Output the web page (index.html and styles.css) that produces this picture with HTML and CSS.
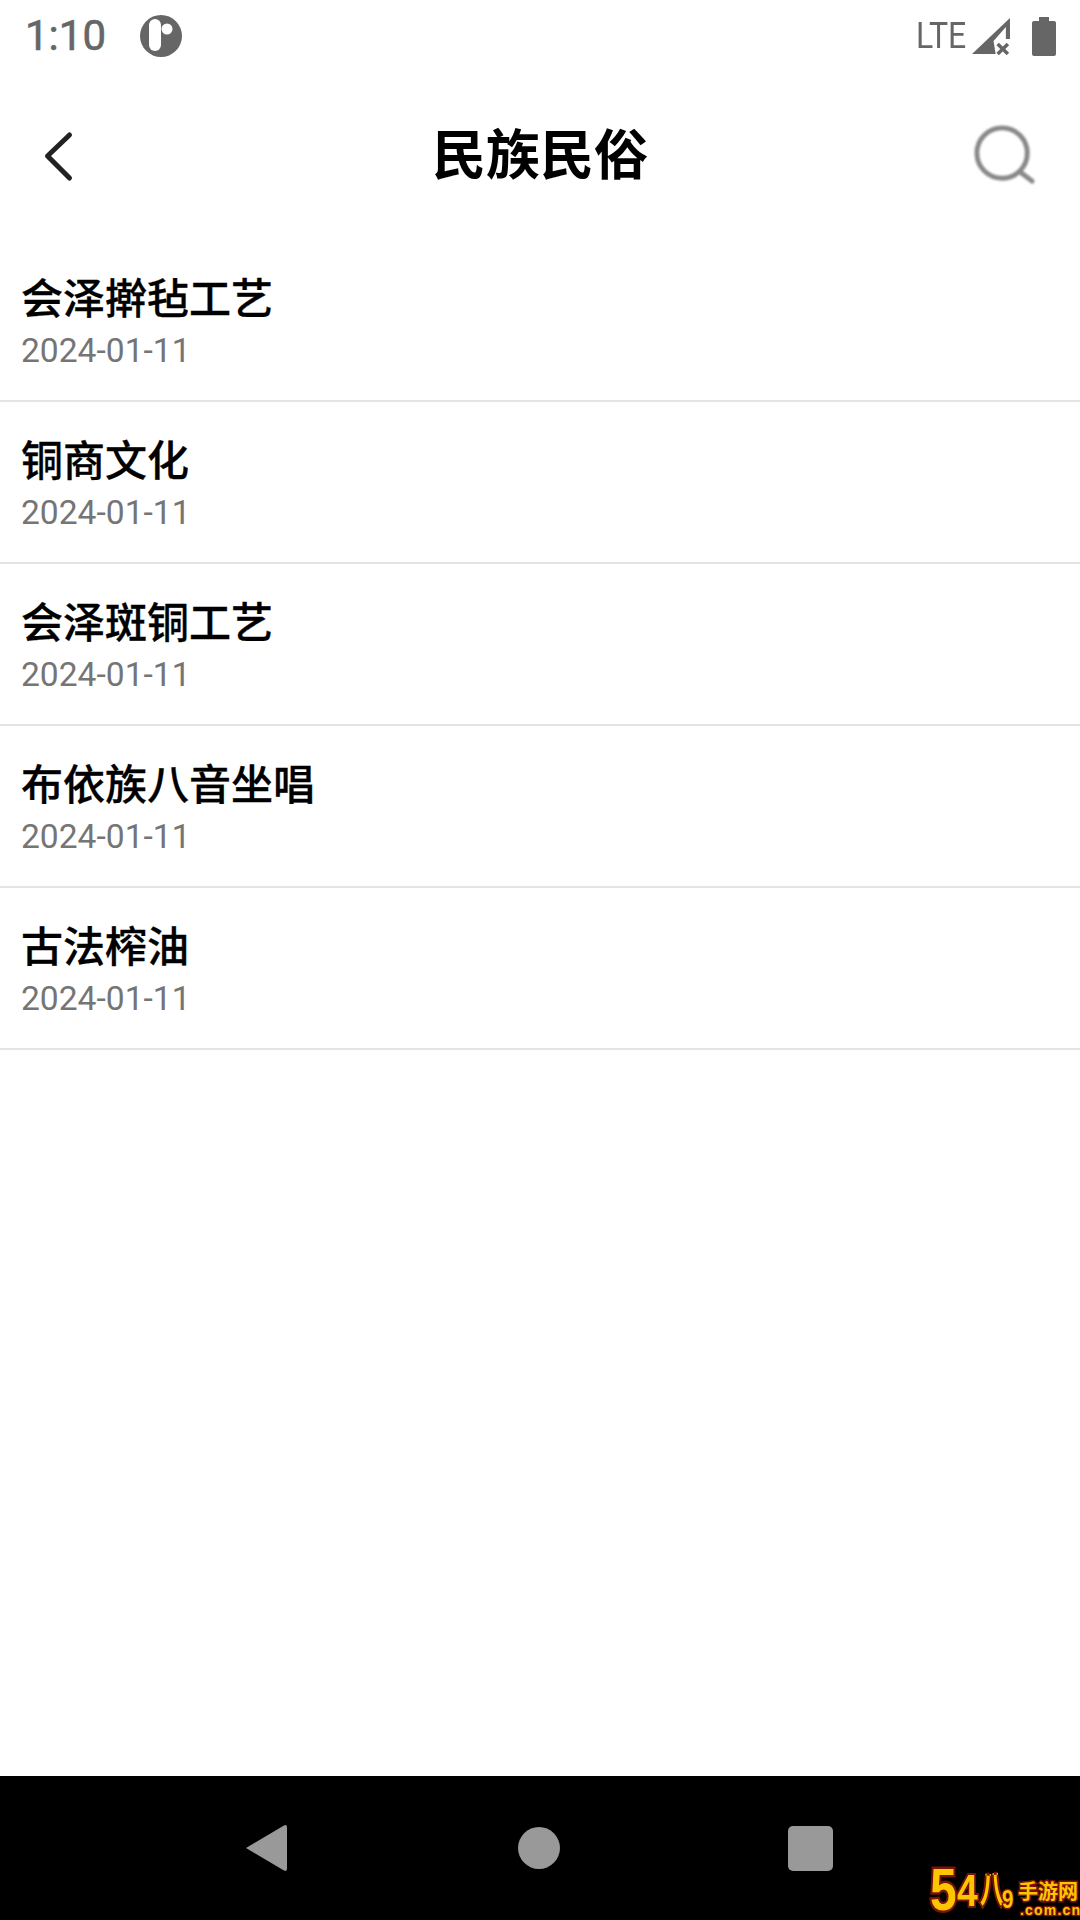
FILE: index.html
```html
<!DOCTYPE html>
<html lang="zh-CN">
<head>
<meta charset="utf-8">
<title>民族民俗</title>
<link rel="stylesheet" href="styles.css">
</head>
<body>
<div class="page">
  <div class="status">
    <span class="time">1:10</span>
    <svg class="app-dot" viewBox="0 0 42 42"><circle cx="21" cy="21" r="21" fill="#666"/><rect x="9" y="4" width="12" height="32" rx="6" fill="#fff"/><circle cx="27" cy="14" r="5.500" fill="#fff"/></svg>
    <span class="spacer"></span>
    <span class="lte">LTE</span>
    <svg class="signal" viewBox="0 0 38 38" preserveAspectRatio="none"><path d="M0 37 37 1V22H33V10L21 24 23 37z" fill="#666"/><path d="M25 27l10 10M35 27 25 37" stroke="#666" stroke-width="3.400" fill="none"/></svg>
    <svg class="battery" viewBox="0 0 24 39"><path d="M7 0h10v4h5a2 2 0 0 1 2 2v31a2 2 0 0 1-2 2H2a2 2 0 0 1-2-2V6a2 2 0 0 1 2-2h5z" fill="#666"/></svg>
  </div>
  <header class="bar">
    <svg class="back" viewBox="0 0 32 52"><path d="M26.500 5 4.500 26l22 22" fill="none" stroke="#222" stroke-width="5" stroke-linecap="round" stroke-linejoin="round"/></svg>
    <h1 class="heading">民族民俗</h1>
    <svg class="search" viewBox="0 0 64 64"><circle cx="29" cy="29" r="26" fill="none" stroke="#888" stroke-width="5"/><path d="M47 48 60 58" stroke="#888" stroke-width="5" stroke-linecap="round"/></svg>
  </header>
  <main class="list">
    <div class="row"><div class="name">会泽擀毡工艺</div><div class="date">2024-01-11</div></div>
    <div class="row"><div class="name">铜商文化</div><div class="date">2024-01-11</div></div>
    <div class="row"><div class="name">会泽斑铜工艺</div><div class="date">2024-01-11</div></div>
    <div class="row"><div class="name">布依族八音坐唱</div><div class="date">2024-01-11</div></div>
    <div class="row"><div class="name">古法榨油</div><div class="date">2024-01-11</div></div>
  </main>
  <nav class="nav">
    <svg class="nav-back" viewBox="0 0 44 48"><path d="M2 24 40 1.500q3-1.500 3 2v41q0 3.500-3 2z" fill="#999"/></svg>
    <span class="nav-home"></span>
    <span class="nav-recent"></span>
  </nav>
  <div class="mark">
    <span class="mark-five">5</span><span class="mark-four">4</span><span class="mark-ba">八</span><span class="mark-nine">9</span>
    <span class="mark-side"><span class="mark-cn">手游网</span><span class="mark-url">.com.cn</span></span>
  </div>
</div>
</body>
</html>
```
FILE: styles.css
```css
* { box-sizing: border-box; }
html, body { margin: 0; padding: 0; }
body { width: 1080px; height: 1920px; background: #fff; font-family: Roboto, "Noto Sans CJK SC", sans-serif; overflow: hidden; }
.page { position: relative; width: 1080px; height: 1920px; display: flex; flex-direction: column; }

.status { height: 72px; display: flex; align-items: center; padding: 0 24px 0 25px; color: #666; }
.time { font-size: 42px; font-weight: 400; line-height: 72px; width: 115px; -webkit-text-stroke: .6px #666; }
.app-dot { width: 42px; height: 42px; }
.spacer { flex: 1; }
.lte { font-size: 36px; font-weight: 400; line-height: 72px; width: 54px; transform: scaleX(.89); transform-origin: left center; }
.signal { width: 39px; height: 38px; margin: 0 21px 0 2px; }
.battery { width: 24px; height: 39px; }

.bar { height: 168px; display: grid; grid-template-columns: 1fr auto 1fr; align-items: center; padding: 0 44px 0 44px; }
.back { width: 32px; height: 52px; position: relative; left: -1px; }
.heading { margin: 0; font: 700 54px/1 "Noto Sans CJK SC", sans-serif; color: #000; position: relative; top: -4px; }
.search { width: 62px; height: 62px; justify-self: end; filter: blur(.8px); }

.list { flex: 1; }
.row { height: 162px; padding: 28px 21px 0 21px; border-bottom: 2px solid #e4e4e4; }
.name { font: 500 42px/56px "Noto Sans CJK SC", sans-serif; color: #000; -webkit-text-stroke: .3px #000; }
.date { font: 400 33.600px/44px Roboto, sans-serif; color: #757575; margin-top: 5px; }

.nav { height: 144px; background: #000; display: flex; align-items: center; padding: 0 247px 0 244px; justify-content: space-between; }
.nav-back { width: 44px; height: 48px; }
.nav-home { width: 42px; height: 42px; border-radius: 50%; background: #999; position: relative; left: 1px; }
.nav-recent { width: 45px; height: 45px; border-radius: 5px; background: #999; }

.mark { position: absolute; left: 930px; top: 1860px; height: 60px; width: 150px; display: flex; align-items: flex-start; color: #fdc500; font-family: "Liberation Sans", sans-serif; font-weight: 700; }
.mark span { paint-order: stroke fill; white-space: nowrap; }
.mark-five { width: 27px; font-size: 60px; line-height: 60px; -webkit-text-stroke: 5px #7a1408; transform: scaleX(.8); transform-origin: left center; }
.mark-four { width: 23px; font-size: 44px; line-height: 62px; -webkit-text-stroke: 4px #7a1408; transform: scaleX(.85); transform-origin: left center; }
.mark-ba { width: 22px; font: 700 24px/56px "Noto Sans CJK SC", sans-serif; -webkit-text-stroke: 2.500px #fdc500; text-shadow: 2px 0 #7a1408, -2px 0 #7a1408, 0 2px #7a1408, 0 -2px #7a1408; transform: scaleY(1.5); }
.mark-nine { width: 14px; font-size: 26px; line-height: 78px; -webkit-text-stroke: 3px #7a1408; transform: scaleX(.8); transform-origin: left center; }
.mark-side { position: absolute; left: 88px; top: 19px; display: flex; flex-direction: column; }
.mark-cn { font: 700 20px/24px "Noto Sans CJK SC", sans-serif; -webkit-text-stroke: 3px #7a1408; }
.mark-url { font-size: 14px; line-height: 15px; letter-spacing: 1.200px; margin-left: 2px; -webkit-text-stroke: 2.500px #7a1408; }
```
